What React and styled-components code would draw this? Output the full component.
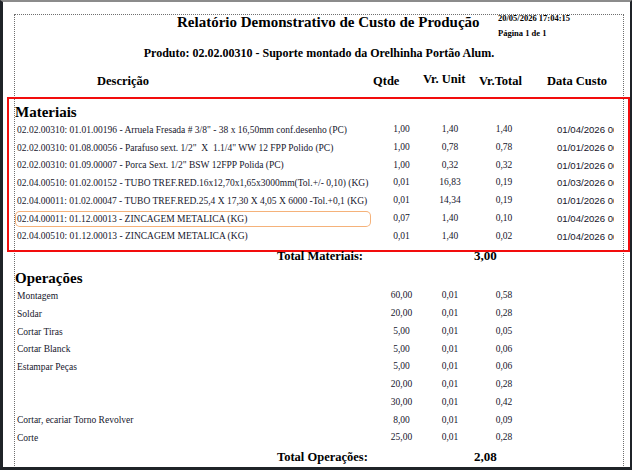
import React from "react";
import styled, { createGlobalStyle } from "styled-components";

const GlobalStyle = createGlobalStyle`
  html, body {
    margin: 0;
    padding: 0;
    background: #ffffff;
  }
  * {
    box-sizing: border-box;
  }
`;

const SERIF = `"Liberation Serif", "Times New Roman", serif`;
const SANS = `"Liberation Sans", Arial, sans-serif`;

// window frame around the report preview
const Frame = styled.div`
    width: 632px;
    height: 470px;
    overflow: hidden;
    background: #ffffff;
    border-top: 2px solid #8b8b8b;
    border-left: 3px solid #1f2328;
    border-right: 2px solid #1f2328;
    border-bottom: 3px solid #1f2328;
`;

const Page = styled.div`
    margin: 12px 6px 0 11px;
    min-height: 520px;
    border: 1px dotted #6f6f6f;
    border-bottom: none;
    font-family: ${SERIF};
    color: #000;
`;

const TopRow = styled.div`
    display: grid;
    grid-template-columns: 464px 1fr;
    align-items: start;
    height: 23px;
`;

const Title = styled.h1`
    margin: 0;
    padding-left: 162px;
    text-align: center;
    font-size: 15px;
    line-height: 15px;
    font-weight: 700;
    white-space: nowrap;
`;

const Stamp = styled.div`
    display: flex;
    flex-direction: column;
    gap: 7px;
    margin: -1px 0 0 19px;
    font-size: 8.5px;
    line-height: 8px;
    font-weight: 700;
    white-space: nowrap;
`;

const Product = styled.div`
    margin-top: 8px;
    text-align: center;
    font-size: 12px;
    line-height: 14px;
    font-weight: 700;
    white-space: nowrap;
`;

const HeaderRow = styled.div`
    display: grid;
    grid-template-columns: 358px 50px 56px 68px 1fr;
    align-items: end;
    margin-top: 12px;
    font-size: 12.5px;
    line-height: 14px;
    font-weight: 700;
    white-space: nowrap;
`;

const HeaderCell = styled.div`
    padding-left: ${({ indent }) => indent || 0}px;
    padding-bottom: ${({ raised }) => (raised ? 2 : 0)}px;
`;

const Highlight = styled.section`
    margin: 9px -7px 0 -8px;
    padding: 5px 5px 5px 6px;
    border: 2px solid #f20d0d;
`;

const SectionTitle = styled.h2`
    margin: 0;
    font-size: 15px;
    line-height: 17px;
    font-weight: 700;
    margin-top: ${({ gap }) => gap || 0}px;
`;

const Row = styled.div`
    display: grid;
    grid-template-columns: 356px 61px 36px 72px 74px;
    height: 17.75px;
    align-items: center;
    font-size: 9.5px;
    line-height: 17.75px;
    color: #16162c;
    white-space: nowrap;
`;

const Desc = styled.div`
    padding-left: 2px;
    height: 16px;
    line-height: 16px;
    overflow: hidden;
    white-space: pre;
    border-radius: 5px;
    box-shadow: ${({ focused }) =>
        focused ? "inset 0 0 0 1px #f5b27a" : "none"};
`;

const Num = styled.div`
    text-align: center;
`;

const DateCell = styled.div`
    padding-left: 17px;
    overflow: hidden;
    font-family: ${SANS};
    font-size: 9.6px;
`;

const TotalRow = styled.div`
    display: grid;
    grid-template-columns: 197px auto;
    align-items: baseline;
    padding-left: 262px;
    margin-top: ${({ gap }) => gap}px;
    line-height: 14px;
    font-weight: 700;
    white-space: nowrap;
`;

const TotalLabel = styled.span`
    font-size: 12.5px;
`;

const TotalValue = styled.span`
    font-size: 13px;
`;

const materials = [
    ["02.02.00310: 01.01.00196 - Arruela Fresada # 3/8\" - 38 x 16,50mm conf.desenho (PC)", "1,00", "1,40", "1,40", "01/04/2026 00:00:00"],
    ["02.02.00310: 01.08.00056 - Parafuso sext. 1/2\"  X  1.1/4\" WW 12 FPP Polido (PC)", "1,00", "0,78", "0,78", "01/01/2026 00:00:00"],
    ["02.02.00310: 01.09.00007 - Porca Sext. 1/2\" BSW 12FPP Polida (PC)", "1,00", "0,32", "0,32", "01/01/2026 00:00:00"],
    ["02.04.00510: 01.02.00152 - TUBO TREF.RED.16x12,70x1,65x3000mm(Tol.+/- 0,10) (KG)", "0,01", "16,83", "0,19", "01/03/2026 00:00:00"],
    ["02.04.00011: 01.02.00047 - TUBO TREF.RED.25,4 X 17,30 X 4,05 X 6000 -Tol.+0,1 (KG)", "0,01", "14,34", "0,19", "01/01/2026 00:00:00"],
    ["02.04.00011: 01.12.00013 - ZINCAGEM METALICA (KG)", "0,07", "1,40", "0,10", "01/04/2026 00:00:00", true],
    ["02.04.00510: 01.12.00013 - ZINCAGEM METALICA (KG)", "0,01", "1,40", "0,02", "01/04/2026 00:00:00"],
];

const operations = [
    ["Montagem", "60,00", "0,01", "0,58"],
    ["Soldar", "20,00", "0,01", "0,28"],
    ["Cortar Tiras", "5,00", "0,01", "0,05"],
    ["Cortar Blanck", "5,00", "0,01", "0,06"],
    ["Estampar Peças", "5,00", "0,01", "0,06"],
    ["", "20,00", "0,01", "0,28"],
    ["", "30,00", "0,01", "0,42"],
    ["Cortar, ecariar Torno Revolver", "8,00", "0,01", "0,09"],
    ["Corte", "25,00", "0,01", "0,28"],
];

const App = () => {
    return (
        <>
            <GlobalStyle />
            <Frame>
                <Page>
                    <TopRow>
                        <Title>Relatório Demonstrativo de Custo de Produção</Title>
                        <Stamp>
                            <span>20/05/2026 17:04:15</span>
                            <span>Página 1 de 1</span>
                        </Stamp>
                    </TopRow>
                    <Product>
                        Produto: 02.02.00310 - Suporte montado da Orelhinha Portão Alum.
                    </Product>
                    <HeaderRow>
                        <HeaderCell indent={82}>Descrição</HeaderCell>
                        <HeaderCell>Qtde</HeaderCell>
                        <HeaderCell raised>Vr. Unit</HeaderCell>
                        <HeaderCell>Vr.Total</HeaderCell>
                        <HeaderCell>Data Custo</HeaderCell>
                    </HeaderRow>

                    <Highlight>
                        <SectionTitle>Materiais</SectionTitle>
                        {materials.map(([desc, qtde, unit, total, date, focused]) => (
                            <Row key={desc}>
                                <Desc focused={focused}>{desc}</Desc>
                                <Num>{qtde}</Num>
                                <Num>{unit}</Num>
                                <Num>{total}</Num>
                                <DateCell>{date}</DateCell>
                            </Row>
                        ))}
                    </Highlight>
                    <TotalRow gap={-3}>
                        <TotalLabel>Total Materiais:</TotalLabel>
                        <TotalValue>3,00</TotalValue>
                    </TotalRow>

                    <SectionTitle gap={7}>Operações</SectionTitle>
                    {operations.map(([desc, qtde, unit, total], i) => (
                        <Row key={i}>
                            <Desc>{desc}</Desc>
                            <Num>{qtde}</Num>
                            <Num>{unit}</Num>
                            <Num>{total}</Num>
                            <DateCell />
                        </Row>
                    ))}
                    <TotalRow gap={3}>
                        <TotalLabel>Total Operações:</TotalLabel>
                        <TotalValue>2,08</TotalValue>
                    </TotalRow>
                </Page>
            </Frame>
        </>
    );
};

export default App;
